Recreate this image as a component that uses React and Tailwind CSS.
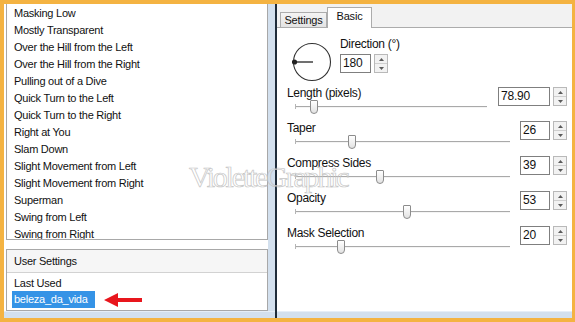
import React from "react";

// ── Data ─────────────────────────────────────────────
const PRESETS = [
  "Masking Low",
  "Mostly Transparent",
  "Over the Hill from the Left",
  "Over the Hill from the Right",
  "Pulling out of a Dive",
  "Quick Turn to the Left",
  "Quick Turn to the Right",
  "Right at You",
  "Slam Down",
  "Slight Movement from Left",
  "Slight Movement from Right",
  "Superman",
  "Swing from Left",
  "Swing from Right",
];

const SLIDERS = [
  { label: "Length (pixels)", value: "78.90", thumb: 15, wide: true },
  { label: "Taper", value: "26", thumb: 53 },
  { label: "Compress Sides", value: "39", thumb: 81 },
  { label: "Opacity", value: "53", thumb: 108 },
  { label: "Mask Selection", value: "20", thumb: 42 },
];

function Spin() {
  return (
    <div className="ml-[3px] w-[14px] h-[19px] flex flex-col border border-[#b9b9b9] bg-[#f2f2f2]">
      <div className="flex-1 flex items-center justify-center border-b border-[#cfcfcf]">
        <svg width="5" height="3" viewBox="0 0 5 3"><path d="M0 3 L2.5 0 L5 3 Z" fill="#5a5a5a" /></svg>
      </div>
      <div className="flex-1 flex items-center justify-center">
        <svg width="5" height="3" viewBox="0 0 5 3"><path d="M0 0 L2.5 3 L5 0 Z" fill="#5a5a5a" /></svg>
      </div>
    </div>
  );
}

function NumBox({ value, width }) {
  return (
    <div className="flex items-start">
      <div
        className={`${width} h-[19px] border border-[#7f7f7f] bg-white pl-[2px] text-[12px] leading-[17px] tracking-[-0.2px]`}
      >
        {value}
      </div>
      <Spin />
    </div>
  );
}

export default function App() {
  return (
    <div className="relative w-[575px] h-[322px] overflow-hidden bg-[#f4b342] pt-[4px] pl-[4px] pr-[3px] pb-[4px] font-['Liberation_Sans',Arial,sans-serif] text-[11px] text-[#111]">
      <div className="flex h-full">
        {/* Left: preset list + user settings */}
        <div className="w-[271px] flex flex-col">
          <div className="flex-1 flex">
            <div className="w-[264px] bg-white pl-[2px] flex flex-col">
              <div className="h-[236px] border-l border-r border-b border-[#a8a8a8] pt-[1px] pl-[7px] overflow-hidden tracking-[-0.25px]">
                {PRESETS.map((p) => (
                  <div key={p} className="h-[17px] leading-[17px] whitespace-nowrap">
                    {p}
                  </div>
                ))}
              </div>
              <div className="mt-[9px] flex-1 border border-[#a8a8a8] flex flex-col tracking-[-0.25px]">
                <div className="h-[23px] leading-[23px] pl-[7px] bg-[#f6f6f6] border-b border-[#d2d2d2]">
                  User Settings
                </div>
                <div className="pl-[7px] pt-[2px] h-[17px] leading-[17px]">Last Used</div>
                <div className="flex items-center pl-[5px] mt-[1px]">
                  <div className="h-[17px] leading-[17px] px-[2px] w-[83px] bg-[#3593e6] text-white">
                    beleza_da_vida
                  </div>
                  <svg className="ml-[9px]" width="38" height="16" viewBox="0 0 38 16">
                    <path d="M0 8 L14 1 L14 6 L38 6 L38 10 L14 10 L14 15 Z" fill="#e8161d" />
                  </svg>
                </div>
              </div>
            </div>
            <div className="w-[7px] bg-[#d3e0ee]" />
          </div>
          <div className="h-[7px] bg-[#d3e0ee] border-t border-[#e6eef7]" />
        </div>

        {/* Divider */}
        <div className="w-[2px] bg-[#1f2c3a]" />

        {/* Right: tabbed settings */}
        <div className="flex-1 flex flex-col">
          <div className="h-[23px] bg-[#f2f2f2] flex items-end pl-[3px] tracking-[-0.2px]">
            <div className="w-[47px] h-[15px] border border-b-0 border-[#acacac] bg-gradient-to-b from-[#f4f4f4] to-[#e3e3e3] text-center leading-[14px]">
              Settings
            </div>
            <div className="w-[45px] h-[21px] border border-b-0 border-[#acacac] bg-white text-center leading-[17px] mb-[-1px] relative z-10">
              Basic
            </div>
          </div>
          <div className="flex-1 bg-white border-t border-[#acacac] pt-[9px]">
            {/* Direction dial */}
            <div className="h-[45px] flex pl-[15px]">
              <svg className="mt-[5px]" width="40" height="40" viewBox="0 0 40 40">
                <circle cx="20" cy="20" r="18.5" fill="none" stroke="#333" strokeWidth="1.1" />
                <line x1="2" y1="20" x2="21" y2="20" stroke="#333" strokeWidth="1.4" />
                <circle cx="2.5" cy="20" r="2.6" fill="#222" />
              </svg>
              <div className="ml-[8px] flex flex-col">
                <div className="h-[14px] leading-[14px] text-[12px] tracking-[-0.3px]">Direction (°)</div>
                <div className="mt-[3px]">
                  <NumBox value="180" width="w-[31px]" />
                </div>
              </div>
            </div>

            {/* Sliders */}
            <div className="mt-[4px] pl-[10px] pr-[5px]">
              {SLIDERS.map((s) => (
                <div key={s.label} className="h-[35px] flex items-start">
                  <div className={`flex-1 flex flex-col ${s.wide ? "mr-[11px]" : "mr-[10px]"}`}>
                    <div className="h-[14px] leading-[14px] text-[12px] tracking-[-0.3px]">{s.label}</div>
                    <div className="relative h-[16px] mt-[-1px] ml-[8px]">
                      <div className="absolute left-0 right-0 top-[7px] h-[2px] border-t border-[#a9a9a9] border-b border-b-[#f4f4f4]" />
                      <div className="absolute left-0 top-[5px] w-[1px] h-[5px] bg-[#b5b5b5]" />
                      <div
                        className="absolute top-[1px] w-[8px] h-[14px] border border-[#8c8c8c] rounded-t-[1px] rounded-b-[4px] bg-gradient-to-b from-white to-[#e2e2e2]"
                        style={{ left: s.thumb }}
                      />
                    </div>
                  </div>
                  <div className={s.wide ? "mt-[1px]" : ""}>
                    <NumBox value={s.value} width={s.wide ? "w-[52px]" : "w-[30px]"} />
                  </div>
                </div>
              ))}
            </div>
          </div>
          <div className="h-[7px] bg-[#d3e0ee] border-t border-[#e6eef7]" />
        </div>
      </div>

      {/* Watermark */}
      <div className="absolute left-[189px] top-[162px] font-['Liberation_Serif',serif] text-[30px] leading-[30px] tracking-[-2.2px] text-white/0 [-webkit-text-stroke:0.7px_#c4c4c4] pointer-events-none whitespace-nowrap">
        VioletteGraphic
      </div>
    </div>
  );
}
